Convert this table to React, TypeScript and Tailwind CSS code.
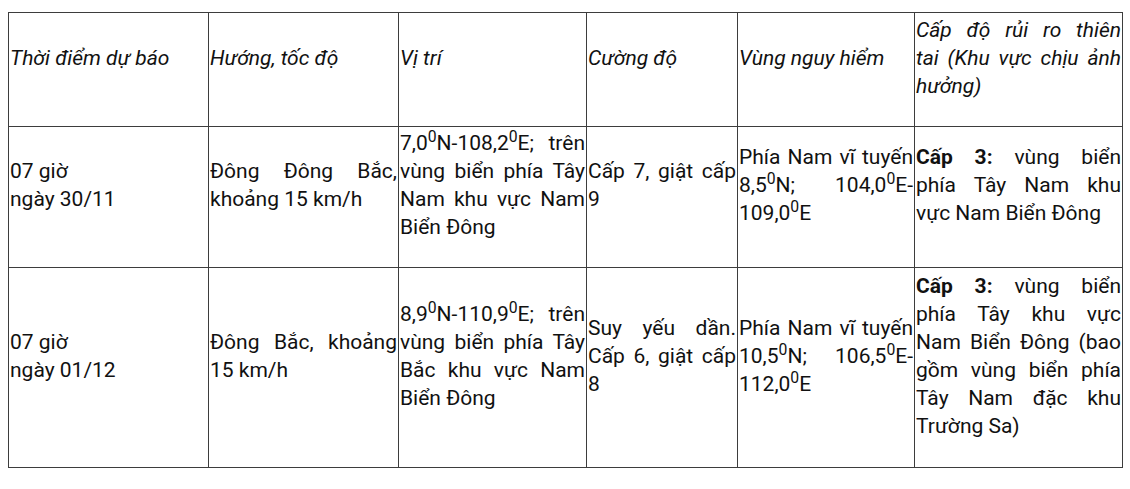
import React from "react";

const Deg = () => <sup>0</sup>;

const cell =
  "border border-[#3d3d3d] px-[1px] pt-[2px] pb-[1px] align-middle text-justify";

const Cell = ({ children, head }: { children: React.ReactNode; head?: boolean }) => (
  <td className={head ? cell + " italic" : cell}>
    <p className="mb-[25px]">{children}</p>
  </td>
);

// last column wraps a bit earlier in the source, so lines are fixed here
const Lines = ({ lines }: { lines: React.ReactNode[] }) => (
  <>
    {lines.map((l, i) => (
      <span
        key={i}
        className={i < lines.length - 1 ? "block [text-align-last:justify]" : "block"}
      >
        {l}
      </span>
    ))}
  </>
);

export default function App() {
  return (
    <div
      className="bg-white w-[1130px] h-[489px] pt-[12px] pl-[8px] text-[#111] text-[21px] leading-[28px]"
      style={{ fontFamily: "Roboto, 'Noto Sans', sans-serif" }}
    >
      <table className="table-fixed border-collapse w-[1114px]">
        <colgroup>
          <col className="w-[200px]" />
          <col className="w-[190px]" />
          <col className="w-[188px]" />
          <col className="w-[151px]" />
          <col className="w-[177px]" />
          <col className="w-[208px]" />
        </colgroup>
        <tbody>
          <tr className="h-[114px]">
            <Cell head>Thời điểm dự báo</Cell>
            <Cell head>Hướng, tốc độ</Cell>
            <Cell head>Vị trí</Cell>
            <Cell head>Cường độ</Cell>
            <Cell head>Vùng nguy hiểm</Cell>
            <Cell head>
              <Lines lines={["Cấp độ rủi ro thiên", "tai (Khu vực chịu ảnh", "hưởng)"]} />
            </Cell>
          </tr>
          <tr className="h-[141px]">
            <Cell>
              07 giờ
              <br />
              ngày 30/11
            </Cell>
            <Cell>Đông Đông Bắc, khoảng 15 km/h</Cell>
            <Cell>
              7,0<Deg />N-108,2<Deg />E; trên vùng biển phía Tây Nam khu vực Nam Biển Đông
            </Cell>
            <Cell>Cấp 7, giật cấp 9</Cell>
            <Cell>
              Phía Nam vĩ tuyến 8,5<Deg />N; 104,0<Deg />E-109,0<Deg />E
            </Cell>
            <Cell>
              <Lines
                lines={[
                  <>
                    <b className="font-bold">Cấp 3:</b> vùng biển
                  </>,
                  "phía Tây Nam khu",
                  "vực Nam Biển Đông",
                ]}
              />
            </Cell>
          </tr>
          <tr className="h-[200px]">
            <Cell>
              07 giờ
              <br />
              ngày 01/12
            </Cell>
            <Cell>Đông Bắc, khoảng 15 km/h</Cell>
            <Cell>
              8,9<Deg />N-110,9<Deg />E; trên vùng biển phía Tây Bắc khu vực Nam Biển Đông
            </Cell>
            <Cell>Suy yếu dần. Cấp 6, giật cấp 8</Cell>
            <Cell>
              Phía Nam vĩ tuyến 10,5<Deg />N; 106,5<Deg />E-112,0<Deg />E
            </Cell>
            <Cell>
              <Lines
                lines={[
                  <>
                    <b className="font-bold">Cấp 3:</b> vùng biển
                  </>,
                  "phía Tây khu vực",
                  "Nam Biển Đông (bao",
                  "gồm vùng biển phía",
                  "Tây Nam đặc khu",
                  "Trường Sa)",
                ]}
              />
            </Cell>
          </tr>
        </tbody>
      </table>
    </div>
  );
}
